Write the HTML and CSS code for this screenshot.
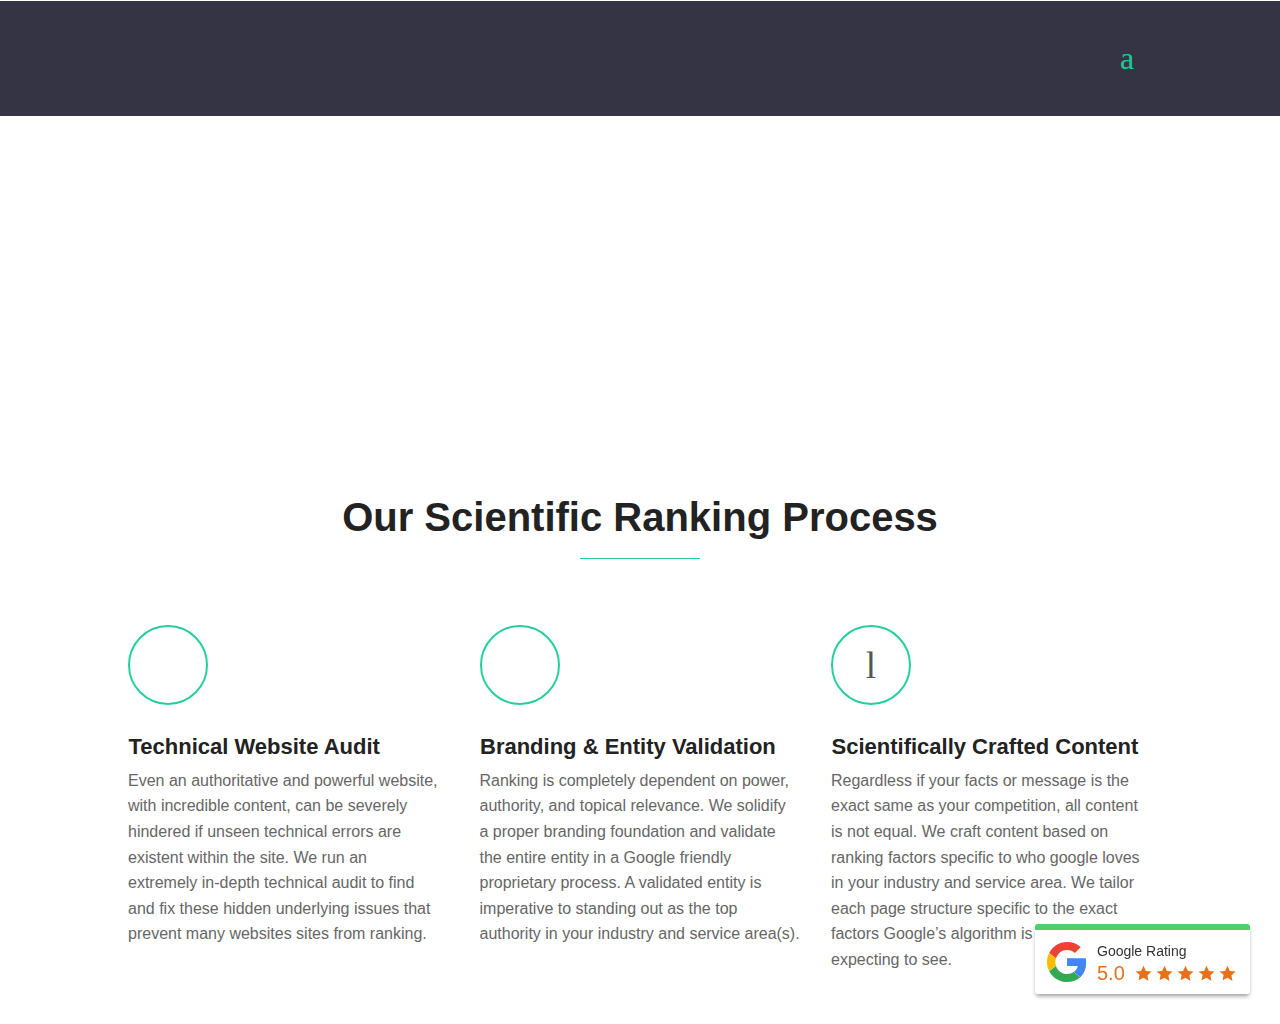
FILE: index.html
```html
<!doctype html>
<html lang="en">
  <head>
    <meta charset="utf-8">
    <meta name="viewport" content="width=device-width, initial-scale=1">
    <title>Our Scientific Ranking Process</title>
    <link rel="stylesheet" href="styles.css">
  </head>
  <body>
    <header class="site-header">
      <span class="header-glyph">a</span>
    </header>
    <main class="process">
      <h1>Our Scientific Ranking Process</h1>
      <div class="title-rule"></div>
      <div class="steps">
        <section class="step">
          <div class="step-circle"></div>
          <h3>Technical Website Audit</h3>
          <p>Even an authoritative and powerful website,<br>with incredible content, can be severely<br>hindered if unseen technical errors are<br>existent within the site. We run an<br>extremely in-depth technical audit to find<br>and fix these hidden underlying issues that<br>prevent many websites sites from ranking.</p>
        </section>
        <section class="step">
          <div class="step-circle"></div>
          <h3>Branding &amp; Entity Validation</h3>
          <p>Ranking is completely dependent on power,<br>authority, and topical relevance. We solidify<br>a proper branding foundation and validate<br>the entire entity in a Google friendly<br>proprietary process. A validated entity is<br>imperative to standing out as the top<br>authority in your industry and service area(s).</p>
        </section>
        <section class="step">
          <div class="step-circle">l</div>
          <h3>Scientifically Crafted Content</h3>
          <p>Regardless if your facts or message is the<br>exact same as your competition, all content<br>is not equal. We craft content based on<br>ranking factors specific to who google loves<br>in your industry and service area. We tailor<br>each page structure specific to the exact<br>factors Google’s algorithm is<br>expecting to see.</p>
        </section>
      </div>
    </main>
    <aside class="rating-badge">
      <svg class="g-logo" viewBox="0 0 48 48" width="40" height="40">
        <path fill="#ea4335" d="M24 9.500c3.900 0 7 1.400 9.500 3.600l7-7C36.300 2.300 30.700 0 24 0 14.600 0 6.500 5.400 2.600 13.200l8.200 6.400C12.700 13.700 17.900 9.500 24 9.500z"/>
        <path fill="#4285f4" d="M47 24.500c0-1.700-.2-3.300-.5-4.900H24v9.300h12.900c-.6 3-2.200 5.500-4.700 7.200l7.900 6.100C44.700 38 47 31.800 47 24.500z"/>
        <path fill="#fbbc05" d="M10.800 28.600c-.5-1.400-.8-3-.8-4.600s.3-3.200.8-4.600l-8.200-6.300C.9 16.400 0 20.100 0 24s.9 7.600 2.600 10.900l8.200-6.300z"/>
        <path fill="#34a853" d="M24 48c6.500 0 11.900-2.100 15.900-5.800L32 36.100c-2.200 1.500-5 2.400-8 2.400-6.100 0-11.300-4.200-13.200-9.800l-8.200 6.300C6.500 42.600 14.600 48 24 48z"/>
      </svg>
      <div class="rating-text">
        <div class="rating-label">Google Rating</div>
        <div class="rating-score">
          <span class="score">5.0</span>
          <span class="stars">
            <svg viewBox="0 0 24 24" width="17" height="17"><path d="M12 1l3.400 7.300 7.900 1-5.800 5.500 1.500 7.900L12 18l-7 3.700 1.500-7.900L.7 9.300l7.900-1z"/></svg>
            <svg viewBox="0 0 24 24" width="17" height="17"><path d="M12 1l3.400 7.300 7.900 1-5.800 5.500 1.500 7.900L12 18l-7 3.700 1.500-7.900L.7 9.300l7.900-1z"/></svg>
            <svg viewBox="0 0 24 24" width="17" height="17"><path d="M12 1l3.400 7.300 7.900 1-5.800 5.500 1.500 7.900L12 18l-7 3.700 1.500-7.900L.7 9.300l7.900-1z"/></svg>
            <svg viewBox="0 0 24 24" width="17" height="17"><path d="M12 1l3.400 7.300 7.900 1-5.800 5.500 1.500 7.900L12 18l-7 3.700 1.500-7.900L.7 9.300l7.900-1z"/></svg>
            <svg viewBox="0 0 24 24" width="17" height="17"><path d="M12 1l3.400 7.300 7.900 1-5.800 5.500 1.500 7.900L12 18l-7 3.700 1.500-7.900L.7 9.300l7.900-1z"/></svg>
          </span>
        </div>
      </div>
    </aside>
  </body>
</html>
```

FILE: styles.css
```css
html {
  height: 100%;
  overflow: hidden;
}

body {
  font-family: "Liberation Sans", Arial, sans-serif;
  margin: 0;
  padding: 0;
  background-color: #fff;
}

.site-header {
  height: 115px;
  margin-top: 1px;
  background: #353445;
  display: flex;
  align-items: center;
  justify-content: flex-end;
  padding-right: 145px;
}

.header-glyph {
  font-family: "Liberation Serif", serif;
  font-size: 32px;
  line-height: 30px;
  color: #23c795;
  width: 15px;
  margin-bottom: 2px;
}

.process {
  padding: 377px 128px 0;
}

h1 {
  margin: 0;
  font-size: 40px;
  line-height: 48px;
  font-weight: 700;
  text-align: center;
  color: #222;
}

.title-rule {
  width: 120px;
  height: 1px;
  margin: 17px auto 66px;
  background: #1fd19a;
}

.steps {
  display: grid;
  grid-template-columns: repeat(3, 321px);
  column-gap: 30.5px;
}

.step-circle {
  width: 76px;
  height: 76px;
  border: 2px solid #23cf9b;
  border-radius: 50%;
  display: flex;
  align-items: center;
  justify-content: center;
  font-family: "Liberation Serif", serif;
  font-size: 37px;
  color: #555;
}

.step h3 {
  margin: 28px 0 0 0.5px;
  font-size: 22px;
  line-height: 28px;
  font-weight: 700;
  color: #222;
  white-space: nowrap;
}

.step p {
  margin: 6.8px 0 0;
  font-size: 16px;
  line-height: 25.6px;
  color: #666;
  white-space: nowrap;
}

.rating-badge {
  position: fixed;
  right: 30px;
  bottom: 30px;
  width: 215px;
  height: 70px;
  box-sizing: border-box;
  border-top: 6px solid #4fce6c;
  border-radius: 3px;
  background: #fff;
  box-shadow: 0 3px 4px -1px rgba(0, 0, 0, 0.4);
  display: flex;
  align-items: center;
  padding: 0 0 0 12px;
}

.g-logo {
  flex: none;
}

.rating-text {
  margin: 4px 0 0 10px;
}

.rating-label {
  font-size: 14px;
  line-height: 16px;
  color: #333;
}

.rating-score {
  display: flex;
  align-items: center;
  margin-top: 2px;
}

.score {
  font-size: 20px;
  line-height: 24px;
  color: #e7711b;
}

.stars {
  display: flex;
  gap: 4px;
  margin-left: 10px;
}

.stars svg {
  fill: #e7711b;
}
```
